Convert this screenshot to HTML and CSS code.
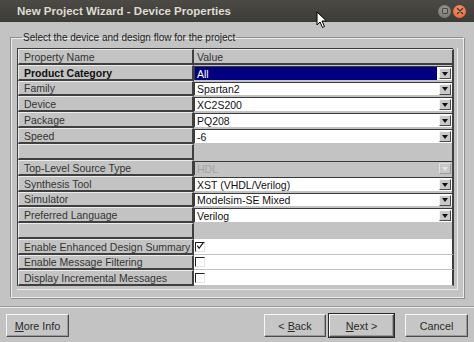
FILE: index.html
```html
<!DOCTYPE html>
<html>
<head>
<meta charset="utf-8">
<link rel="stylesheet" href="styles.css">
</head>
<body>
<div class="window">
  <div class="titlebar">
    <span class="title">New Project Wizard - Device Properties</span>
    <div class="wctrls">
      <span class="wbtn max"><span class="sq"></span></span>
      <span class="wbtn close">
        <svg width="12" height="12" viewBox="0 0 12 12"><path d="M3.5 3.5 L8.5 8.5 M8.5 3.5 L3.5 8.5" stroke="#3c3b37" stroke-width="1.4" stroke-linecap="round"/></svg>
      </span>
    </div>
    <svg class="cursor" width="12" height="18" viewBox="0 0 12 18"><path d="M1 1 L1 14 L4 11 L6.5 16.5 L8.5 15.5 L6 10 L10.5 10 Z" fill="#fff" stroke="#000" stroke-width="1" stroke-linejoin="round"/></svg>
  </div>
  <div class="main">
    <fieldset class="group">
      <legend class="legend">Select the device and design flow for the project</legend>
      <div class="frame">
        <div class="props">
          <div class="name">Property Name</div><div class="val head">Value</div>
          <div class="name bold">Product Category</div><div class="val"><div class="combo sel"><span class="txt">All</span><span class="arrow"><i></i></span></div></div>
          <div class="name">Family</div><div class="val"><div class="combo"><span class="txt">Spartan2</span><span class="arrow"><i></i></span></div></div>
          <div class="name">Device</div><div class="val"><div class="combo"><span class="txt">XC2S200</span><span class="arrow"><i></i></span></div></div>
          <div class="name">Package</div><div class="val"><div class="combo"><span class="txt">PQ208</span><span class="arrow"><i></i></span></div></div>
          <div class="name">Speed</div><div class="val"><div class="combo"><span class="txt">-6</span><span class="arrow"><i></i></span></div></div>
          <div class="name"></div><div class="val blank"></div>
          <div class="name">Top-Level Source Type</div><div class="val"><div class="combo dis"><span class="txt">HDL</span><span class="arrow"><i></i></span></div></div>
          <div class="name">Synthesis Tool</div><div class="val"><div class="combo"><span class="txt">XST (VHDL/Verilog)</span><span class="arrow"><i></i></span></div></div>
          <div class="name">Simulator</div><div class="val"><div class="combo"><span class="txt">Modelsim-SE Mixed</span><span class="arrow"><i></i></span></div></div>
          <div class="name">Preferred Language</div><div class="val"><div class="combo"><span class="txt">Verilog</span><span class="arrow"><i></i></span></div></div>
          <div class="name"></div><div class="val blank"></div>
          <div class="name">Enable Enhanced Design Summary</div><div class="val chk"><span class="box"><svg width="9" height="9" viewBox="0 0 9 9"><path d="M1.5 3.5 L3.5 6.5 L8 0.5" stroke="#111" stroke-width="1.3" fill="none"/></svg></span></div>
          <div class="name">Enable Message Filtering</div><div class="val chk"><span class="box"></span></div>
          <div class="name">Display Incremental Messages</div><div class="val chk"><span class="box"></span></div>
        </div>
      </div>
    </fieldset>
  </div>
  <div class="sep"></div>
  <div class="buttons">
    <button class="btn more"><u>M</u>ore Info</button>
    <div class="spacer"></div>
    <button class="btn back">&lt; <u>B</u>ack</button>
    <button class="btn next"><u>N</u>ext &gt;</button>
    <button class="btn cancel">Cancel</button>
  </div>
</div>
</body>
</html>
```

FILE: styles.css
```css
* { box-sizing: border-box; }
html, body { margin: 0; padding: 0; }
body {
  width: 474px;
  height: 342px;
  overflow: hidden;
  background: #c3c3c3;
  font-family: "Liberation Sans", Arial, sans-serif;
}
.window { width: 474px; height: 342px; display: flex; flex-direction: column; }

.titlebar {
  position: relative;
  height: 22px;
  flex: none;
  background: linear-gradient(#4b4a45, #3c3b37);
  display: flex;
  align-items: center;
  padding-left: 17px;
  padding-right: 8px;
}
.title {
  color: #dfdbd2;
  font-weight: bold;
  font-size: 11.5px;
}
.wctrls { margin-left: auto; display: flex; gap: 2px; align-items: center; }
.wbtn {
  width: 13px; height: 13px; border-radius: 50%;
  display: flex; align-items: center; justify-content: center;
}
.wbtn.max { background: radial-gradient(circle at 50% 35%, #9a9893, #72716c); }
.wbtn.max .sq { width: 6px; height: 6px; border: 1px solid #4a4945; border-radius: 1px; }
.wbtn.close { background: radial-gradient(circle at 50% 35%, #f79466, #e8602c); }
.cursor { position: absolute; left: 316px; top: 11px; }

.main { padding: 10px 10px 0 10px; }
.group {
  margin: 0;
  width: 454px;
  height: 266px;
  padding: 5px 4px 0 6px;
  border-style: solid;
  border-width: 1px;
  border-color: #8e8e8e #ececec #ececec #8e8e8e;
  box-shadow: inset 1px 1px 0 #ececec, 1px 1px 0 #8e8e8e;
}
.legend {
  font-size: 10px;
  color: #1e1e1e;
  padding: 0 1px;
  margin-left: 5px;
}
.frame {
  width: 441px;
  height: 242px;
  border-right: 1px solid #ececec;
  border-bottom: 1px solid #ececec;
}
.props {
  display: grid;
  width: 436px;
  grid-template-columns: 176px 260px;
  grid-template-rows: 16px 16px 15px 16px 16px 16px 16px 16px 16px 15px 16px 16px 16px 15px 16px;
  border-left: 1px solid #3a3a3a;
  border-top: 1px solid #3a3a3a;
  font-size: 10.5px;
}
.name {
  background: #c3c3c3;
  color: #333;
  border-top: 1px solid #ececec;
  border-left: 1px solid #ececec;
  border-right: 2px solid #3f3f3f;
  border-bottom: 2px solid #3f3f3f;
  padding-left: 5px;
  display: flex;
  align-items: center;
  white-space: nowrap;
  overflow: hidden;
}
.name.bold { font-weight: bold; color: #111; }
.val {
  border-right: 2px solid #3f3f3f;
  padding: 1px 0 1px 0;
  display: flex;
  background: #c3c3c3;
}
.val.head {
  border-top: 1px solid #ececec;
  border-bottom: 2px solid #3f3f3f;
  padding: 0 0 0 3px;
  align-items: center;
  color: #333;
}
.combo {
  flex: 1;
  display: flex;
  align-items: center;
  background: #fff;
  border-top: 1px solid #3a3a3a;
  border-left: 1px solid #3a3a3a;
  color: #111;
  padding-right: 1px;
}
.combo .txt { flex: 1; padding-left: 2px; white-space: nowrap; line-height: 12px; }
.combo.sel .txt { background: #000080; color: #fff; margin-right: 2px; align-self: stretch; display: flex; align-items: center; }
.combo.dis { background: #c3c3c3; color: #a4a4a4; }
.arrow {
  width: 12px;
  height: 11px;
  background: #c8c8c8;
  border: 1px solid;
  border-color: #f4f4f4 #4a4a4a #4a4a4a #f4f4f4;
  display: flex;
  align-items: center;
  justify-content: center;
}
.arrow i {
  width: 0; height: 0;
  border-left: 3px solid transparent;
  border-right: 3px solid transparent;
  border-top: 4px solid #111;
}
.combo.dis .arrow { border-color: #e0e0e0 #9a9a9a #9a9a9a #e0e0e0; }
.combo.dis .arrow i { border-top-color: #e6e6e6; }
.val.blank { border-bottom: none; }
.val.chk {
  background: #fff;
  border-bottom: 1px solid #c3c3c3;
  align-items: center;
  padding-left: 1px;
}
.box {
  width: 10px; height: 10px;
  border-top: 1px solid #222;
  border-left: 1px solid #222;
  border-right: 1px solid #e4e4e4;
  border-bottom: 1px solid #e4e4e4;
  display: flex;
  align-items: center;
  justify-content: center;
}

.sep {
  margin-top: 8px;
  height: 2px;
  border-top: 1px solid #9a9a9a;
  border-bottom: 1px solid #ececec;
}
.buttons {
  display: flex;
  padding: 6px 6px 0 6px;
  align-items: center;
}
.spacer { flex: 1; }
.btn {
  height: 23px;
  margin: 0;
  background: #c6c6c6;
  border: 1px solid;
  border-color: #f6f6f6 #4c4c4c #4c4c4c #f6f6f6;
  box-shadow: inset -1px -1px 0 #9a9a9a;
  font-family: "Liberation Sans", Arial, sans-serif;
  font-size: 10.8px;
  color: #2a2a2a;
  padding: 0;
}
.btn u { text-decoration: underline; }
.more { width: 63px; }
.back { width: 62px; margin-right: 3px; }
.next { width: 65px; margin-right: 11px; outline: 1px solid #2a2a2a; outline-offset: 0; }
.cancel { width: 63px; }
```
